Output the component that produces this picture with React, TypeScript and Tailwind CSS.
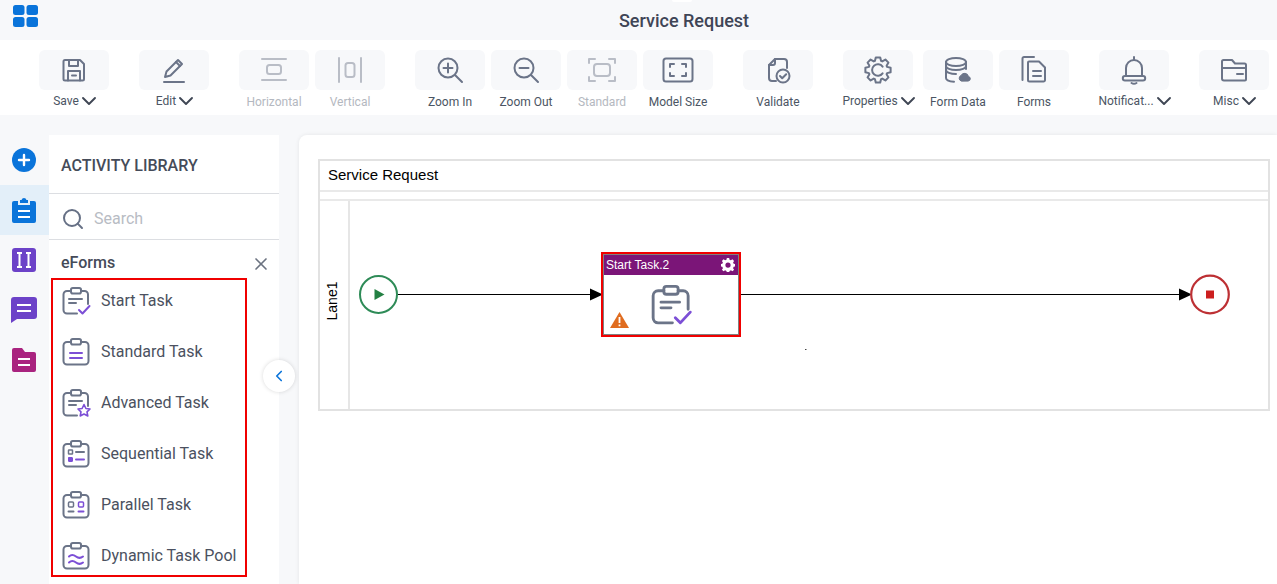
import type { ReactNode } from 'react';
import { ChevronDown, ChevronLeft, Search, X } from 'lucide-react';

const G = '#6b7488';
const P = '#7c4fd6';

const Svg = ({ children, size = 28, color = G, sw = 2 }: { children: ReactNode; size?: number; color?: string; sw?: number }) => (
  <svg className="overflow-visible" width={size} height={size} viewBox="0 0 28 28" fill="none" stroke={color} strokeWidth={sw} strokeLinecap="round" strokeLinejoin="round">
    {children}
  </svg>
);

// outline of an 8 tooth cog round (14,14)
const gearPath = () => {
  const pts: string[] = [];
  for (let i = 0; i < 8; i++) {
    const a = (i * Math.PI) / 4 - Math.PI / 2;
    const at = (r: number, d: number) => `${(14 + r * Math.cos(a + d)).toFixed(2)} ${(14 + r * Math.sin(a + d)).toFixed(2)}`;
    pts.push(at(9.6, -0.33), at(12.8, -0.17), at(12.8, 0.17), at(9.6, 0.33));
  }
  return `M${pts.join('L')}z`;
};

// toolbar icons
const SaveIcon = () => (
  <Svg>
    <path d="M5 4h15l4 4v15a1.500 1.500 0 0 1-1.500 1.500h-17.500A1.500 1.500 0 0 1 3.500 23V5.500A1.500 1.500 0 0 1 5 4z" />
    <path d="M9 4v6h9V4" />
    <path d="M8 24.500V15h12v9.500" />
    <path d="M12 19.500h4" />
  </Svg>
);
const EditIcon = () => (
  <Svg>
    <path d="M5 21l1.500-5.500L18 4l4 4L10.500 19.500z" />
    <path d="M16 6l4 4" />
    <path d="M4 26h20" />
  </Svg>
);
const HorizontalIcon = () => (
  <Svg color="#b9bdc6">
    <path d="M2 3h24M2 24h24" />
    <rect x="7" y="9" width="14" height="9" rx="2.500" />
  </Svg>
);
const VerticalIcon = () => (
  <Svg color="#b9bdc6">
    <path d="M3 2v24M25 2v24" />
    <rect x="9.500" y="7" width="9" height="14" rx="2.500" />
  </Svg>
);
const ZoomInIcon = () => (
  <Svg>
    <circle cx="12" cy="12" r="9.500" />
    <path d="M19 19l7 7M12 7.500v9M7.500 12h9" />
  </Svg>
);
const ZoomOutIcon = () => (
  <Svg>
    <circle cx="12" cy="12" r="9.500" />
    <path d="M19 19l7 7M7.500 12h9" />
  </Svg>
);
const StandardIcon = () => (
  <Svg color="#b9bdc6">
    <path d="M1 7V3h6M21 3h6v4M27 21v4h-6M7 25H1v-4" />
    <rect x="6" y="8" width="16" height="12" rx="3" />
  </Svg>
);
const ModelSizeIcon = () => (
  <Svg>
    <rect x="-0.500" y="2.500" width="29" height="23" rx="2.500" />
    <path d="M6 11V8h4M18 8h4v3M22 17v3h-4M10 20H6v-3" />
  </Svg>
);
const ValidateIcon = () => (
  <Svg>
    <path d="M12 25H8a3 3 0 0 1-3-3V9l6-6h9a3 3 0 0 1 3 3v6" />
    <path d="M11 3v4a2 2 0 0 1-2 2H5" />
    <circle cx="19" cy="20" r="6.500" />
    <path d="M16 20l2.200 2.200 4-4" />
  </Svg>
);
const GearIcon = () => (
  <Svg>
    <path d={gearPath()} />
    <path d="M18.600 10.600a5.800 5.800 0 1 0 0 6.800" />
  </Svg>
);
const FormDataIcon = () => (
  <Svg>
    <ellipse cx="12" cy="6" rx="10" ry="4" />
    <path d="M2 6v16c0 2 3.500 3.500 8 3.800M22 6v7M2 14c0 2.200 4.500 4 10 4M2 10c0 2.200 4.500 4 10 4s10-1.800 10-4" />
    <path fill={G} strokeWidth={1} d="M17 25a3 3 0 0 1 0-5.500 4 4 0 0 1 7.500 1 2.300 2.300 0 0 1 0 4.500z" />
  </Svg>
);
const FormsIcon = () => (
  <Svg>
    <path d="M14 1H4a1.500 1.500 0 0 0-1.500 1.500V24" />
    <path d="M8 6.500a1 1 0 0 1 1-1h10l6 6V24a1.500 1.500 0 0 1-1.500 1.500H9.500A1.500 1.500 0 0 1 8 24z" />
    <path d="M13 15h8M13 20h8" />
  </Svg>
);
const BellIcon = () => (
  <Svg>
    <path d="M14 1v2.500M6 20V12a8 8 0 0 1 16 0v8" />
    <path d="M5 20h18a2.200 2.200 0 0 1 0 4.400H5A2.200 2.200 0 0 1 5 20z" />
    <path d="M11.500 27c1.500 1 3.500 1 5 0" />
  </Svg>
);
const MiscIcon = () => (
  <Svg>
    <path d="M2 22V5.500A1.500 1.500 0 0 1 3.500 4H12l3 3.500h9.500A1.500 1.500 0 0 1 26 9v14.500a1 1 0 0 1-1 1H4a2 2 0 0 1-2-2z" />
    <path d="M2 12h24M17 18h6" />
  </Svg>
);

// base clipboard shape of the task icons, 28x28 box
const Clipboard = ({ children, open }: { children?: ReactNode; open?: boolean }) => (
  <>
    <rect x="9" y="1" width="10" height="5.500" rx="1.800" />
    <path d={open ? 'M9 4H5a3.500 3.500 0 0 0-3.500 3.500V23A3.500 3.500 0 0 0 5 26.500h10M19 4h3.500A3.500 3.500 0 0 1 26 7.500V17' : 'M9 4H5a3.500 3.500 0 0 0-3.500 3.500V23A3.500 3.500 0 0 0 5 26.500h18a3.500 3.500 0 0 0 3.500-3.500V7.500A3.500 3.500 0 0 0 23 4h-4'} />
    {children}
  </>
);

const StartTaskGlyph = ({ size = 28, sw = 2 }: { size?: number; sw?: number }) => (
  <Svg size={size} sw={sw}>
    <Clipboard open>
      <path d="M7 12h13M7 16h7" />
      <path d="M17 23l3.500 3.500L27.500 19" stroke={P} />
    </Clipboard>
  </Svg>
);
const StandardGlyph = () => (
  <Svg>
    <Clipboard>
      <path d="M8 15h12M8 20h12" stroke={P} />
    </Clipboard>
  </Svg>
);
const AdvancedGlyph = () => (
  <Svg>
    <Clipboard open>
      <path d="M7 12h13M7 16h7" />
      <path d="M22 15.500l1.900 4 4.100.5-3 2.900.8 4.100-3.800-2-3.800 2 .8-4.100-3-2.900 4.100-.5z" stroke={P} strokeWidth={1.600} />
    </Clipboard>
  </Svg>
);
const SequentialGlyph = () => (
  <Svg>
    <Clipboard>
      <rect x="6.500" y="10" width="4" height="4" rx="0.500" strokeWidth={1.500} />
      <path d="M14 12h8" />
      <rect x="6.500" y="17.500" width="4" height="4" rx="0.500" stroke={P} fill={P} strokeWidth={1} />
      <path d="M14 19.500h8" stroke={P} />
    </Clipboard>
  </Svg>
);
const ParallelGlyph = () => (
  <Svg>
    <Clipboard>
      <rect x="6.500" y="11" width="5" height="5" rx="1" strokeWidth={1.500} />
      <rect x="16.500" y="11" width="5" height="5" rx="1" stroke={P} strokeWidth={1.500} />
      <path d="M6.500 20.500h5" />
      <path d="M16.500 20.500h5" stroke={P} />
    </Clipboard>
  </Svg>
);
const DynamicGlyph = () => (
  <Svg>
    <Clipboard>
      <path d="M7 14.500c2.500-2.500 4.500-2 7 0s4.500 2 7 0M7 20.500c2.500-2.500 4.500-2 7 0s4.500 2 7 0" stroke={P} />
    </Clipboard>
  </Svg>
);

type Tool = { label: string; icon: ReactNode; menu?: boolean; off?: boolean; cls: string };

const tools: Tool[] = [
  { label: 'Save', icon: <SaveIcon />, menu: true, cls: 'ml-[39px]' },
  { label: 'Edit', icon: <EditIcon />, menu: true, cls: 'ml-[30px]' },
  { label: 'Horizontal', icon: <HorizontalIcon />, off: true, cls: 'ml-[30px]' },
  { label: 'Vertical', icon: <VerticalIcon />, off: true, cls: 'ml-[6px]' },
  { label: 'Zoom In', icon: <ZoomInIcon />, cls: 'ml-[30px]' },
  { label: 'Zoom Out', icon: <ZoomOutIcon />, cls: 'ml-[6px]' },
  { label: 'Standard', icon: <StandardIcon />, off: true, cls: 'ml-[6px]' },
  { label: 'Model Size', icon: <ModelSizeIcon />, cls: 'ml-[6px]' },
  { label: 'Validate', icon: <ValidateIcon />, cls: 'ml-[30px]' },
  { label: 'Properties', icon: <GearIcon />, menu: true, cls: 'ml-[30px]' },
  { label: 'Form Data', icon: <FormDataIcon />, cls: 'ml-[10px]' },
  { label: 'Forms', icon: <FormsIcon />, cls: 'ml-[6px]' },
  { label: 'Notificat...', icon: <BellIcon />, menu: true, cls: 'ml-[30px]' },
  { label: 'Misc', icon: <MiscIcon />, menu: true, cls: 'ml-[30px]' },
];

const tasks: { label: string; icon: ReactNode }[] = [
  { label: 'Start Task', icon: <StartTaskGlyph /> },
  { label: 'Standard Task', icon: <StandardGlyph /> },
  { label: 'Advanced Task', icon: <AdvancedGlyph /> },
  { label: 'Sequential Task', icon: <SequentialGlyph /> },
  { label: 'Parallel Task', icon: <ParallelGlyph /> },
  { label: 'Dynamic Task Pool', icon: <DynamicGlyph /> },
];

const ToolButton = ({ tool }: { tool: Tool }) => (
  <div className={`flex w-[70px] shrink-0 flex-col items-center ${tool.cls}`}>
    <div className="flex h-10 w-[70px] items-center justify-center rounded-md bg-[#f7f8fa]">{tool.icon}</div>
    {tool.menu ? (
      <div className="mt-[3px] flex h-4 items-center text-xs whitespace-nowrap text-[#4b5563]">
        {tool.label}
        <ChevronDown size={24} strokeWidth={1.9} className="mr-[-6px] ml-[-2px] text-[#3f4654]" />
      </div>
    ) : (
      <div className={`mt-1 h-4 text-xs whitespace-nowrap ${tool.off ? 'text-[#b4b8c0]' : 'text-[#4b5563]'}`}>{tool.label}</div>
    )}
  </div>
);

const Rail = () => (
  <div className="flex w-[49px] shrink-0 flex-col">
    <div className="flex h-[50px] items-center justify-center pr-[2px]">
      <svg width="24" height="24" viewBox="0 0 24 24">
        <circle cx="12" cy="12" r="12" fill="#0a74da" />
        <path d="M12 7v10M7 12h10" stroke="#fff" strokeWidth="2.400" strokeLinecap="round" />
      </svg>
    </div>
    <div className="flex h-[50px] items-center justify-center bg-[#e3eff9] pr-[2px]">
      <svg width="24" height="26" viewBox="0 0 24 26">
        <path fill="#0a74da" d="M8 3h1.500a2.600 2.600 0 0 1 5 0H16v3H8zM2 4h4v4h12V4h4a2 2 0 0 1 2 2v18a2 2 0 0 1-2 2H2a2 2 0 0 1-2-2V6a2 2 0 0 1 2-2z" />
        <path d="M6 14h12M6 20h12" stroke="#fff" strokeWidth="2.200" />
      </svg>
    </div>
    <div className="flex h-[50px] items-center justify-center pr-[2px]">
      <svg width="24" height="24" viewBox="0 0 24 24">
        <rect width="24" height="24" rx="3" fill="#6c42c8" />
        <path d="M5 5h5M7.500 5v14M5 19h5M14 5h5M16.500 5v14M14 19h5" stroke="#fff" strokeWidth="2" />
      </svg>
    </div>
    <div className="flex h-[50px] items-center justify-center pr-[2px]">
      <svg width="26" height="26" viewBox="0 0 26 26">
        <path fill="#6c42c8" d="M3 0h20a3 3 0 0 1 3 3v16a3 3 0 0 1-3 3H6l-6 4V3a3 3 0 0 1 3-3z" />
        <path d="M6 8h14M6 14h14" stroke="#fff" strokeWidth="2.200" />
      </svg>
    </div>
    <div className="flex h-[50px] items-center justify-center pr-[2px]">
      <svg width="24" height="24" viewBox="0 0 24 24">
        <path fill="#a9237f" d="M0 2a2 2 0 0 1 2-2h8l3 4h9a2 2 0 0 1 2 2v16a2 2 0 0 1-2 2H2a2 2 0 0 1-2-2z" />
        <path d="M6 11h12M6 17h12" stroke="#fff" strokeWidth="2.200" />
      </svg>
    </div>
  </div>
);

const Library = () => (
  <div className="relative w-[230px] shrink-0 bg-white">
    <div className="flex h-[59px] items-center border-b border-[#dcdee2] pt-1 pl-3 text-base font-medium text-[#454b59]">ACTIVITY LIBRARY</div>
    <div className="flex h-[46px] items-center gap-[9px] border-b border-[#dcdee2] pt-1 pl-3">
      <Search size={24} strokeWidth={2} className="text-[#667085]" />
      <span className="text-base text-[#b8bcc4]">Search</span>
    </div>
    <div className="flex h-[38px] items-center justify-between pt-2 pr-2 pl-3">
      <span className="text-base font-medium text-[#454b59]">eForms</span>
      <X size={20} strokeWidth={2} className="mt-[1px] text-[#6b7280]" />
    </div>
    <div className="ml-[2px] flex h-[299px] w-[196px] flex-col gap-[7px] border-2 border-[#f00000]">
      {tasks.map((t) => (
        <div key={t.label} className="mt-[-1px] mb-[1px] flex h-[44px] shrink-0 items-center gap-[11px] pl-[9px]">
          {t.icon}
          <span className="text-base text-[#4b5160]">{t.label}</span>
        </div>
      ))}
    </div>
    <button className="absolute top-[225px] left-[214px] flex h-8 w-8 items-center justify-center rounded-full bg-white shadow-[0_0_4px_rgba(0,0,0,0.15)]">
      <ChevronLeft size={18} strokeWidth={2.2} className="text-[#0a74da]" />
    </button>
  </div>
);

const Diagram = () => (
  <div className="relative flex-1">
    <svg className="absolute inset-0 h-full w-full" fill="none">
      <path d="M47 93.500h194" stroke="#000" strokeWidth="1" />
      <path d="M240 87.500l13 6-13 6z" fill="#000" />
      <path d="M389 93.500h442" stroke="#000" strokeWidth="1" />
      <path d="M829 87.500l13 6-13 6z" fill="#000" />
      <circle cx="28.500" cy="93.500" r="18.500" stroke="#2e8b57" strokeWidth="2" fill="#fff" />
      <path d="M24.500 88l10 5.500-10 5.500z" fill="#238043" />
      <circle cx="860" cy="93.500" r="18.800" stroke="#bd3034" strokeWidth="2.200" fill="#fff" />
      <rect x="856" y="89.500" width="8" height="8" fill="#cc1f1f" />
      <rect x="455" y="148" width="1.500" height="1" fill="#444" />
    </svg>
    <div className="absolute top-[51px] left-[251px] h-[85px] w-[140px] border-2 border-[#f00000]">
      <div className="relative h-full w-full border border-[#808080] bg-white">
        <div className="flex h-[20px] items-center justify-between bg-[#7b1578] pr-[3px] pl-[2px] font-['Liberation_Sans',sans-serif] text-xs text-white">
          Start Task.2
          <svg width="14" height="14" viewBox="0 0 24 24" fill="#fff">
            <path fillRule="evenodd" d="M10 1h4l.6 3 2.400 1 2.600-1.700 2.800 2.800L20.700 8.700l1 2.300 3 .6v4l-3 .6-1 2.300 1.700 2.600-2.800 2.800-2.600-1.700-2.400 1-.6 3h-4l-.6-3-2.400-1-2.600 1.700-2.800-2.800 1.700-2.600-1-2.300-3-.6v-4l3-.6 1-2.300L1.600 6.100l2.800-2.800L7 5l2.400-1zM12 8.500a4.500 4.500 0 1 0 0 9 4.500 4.500 0 0 0 0-9z" transform="translate(0 -1)" />
          </svg>
        </div>
        <div className="absolute top-[30px] left-[47px]">
          <StartTaskGlyph size={40} sw={2} />
        </div>
        <svg className="absolute bottom-[6px] left-[6px]" width="19" height="16" viewBox="0 0 19 16">
          <path d="M9.500 0L19 16H0z" fill="#e06c1f" />
          <path d="M9.500 5v6M9.500 12.500v1.800" stroke="#fff" strokeWidth="1.800" />
        </svg>
      </div>
    </div>
  </div>
);

const Canvas = () => (
  <div className="ml-5 flex-1 rounded-tl-lg bg-white pt-6 pr-[7px] pl-[19px] shadow-[0_0_4px_rgba(0,0,0,0.08)]">
    <div className="flex h-[252px] flex-col border-2 border-[#e2e2e2] font-['Liberation_Sans',sans-serif] text-black">
      <div className="flex h-[29px] shrink-0 items-center pl-2 text-[15px]">Service Request</div>
      <div className="h-[11px] shrink-0 border-y-2 border-[#e9e9e9]" />
      <div className="flex flex-1">
        <div className="flex w-[30px] shrink-0 items-center justify-center border-r-2 border-[#e6e6e6] pr-[3px]">
          <span className="mt-[-8px] block -rotate-90 text-sm">Lane1</span>
        </div>
        <Diagram />
      </div>
    </div>
  </div>
);

export default function App() {
  return (
    <div className="relative flex h-[584px] w-[1277px] flex-col overflow-hidden bg-[#f7f8fa] font-['Roboto',sans-serif]">
      <div className="relative flex h-10 shrink-0 items-center justify-center">
        <svg className="absolute top-[5px] left-[13px]" width="25" height="22" viewBox="0 0 25 22" fill="#0a74da">
          <rect width="11.500" height="10" rx="2.500" />
          <rect x="13.500" width="11.500" height="10" rx="2.500" />
          <rect y="12" width="11.500" height="10" rx="2.500" />
          <rect x="13.500" y="12" width="11.500" height="10" rx="2.500" />
        </svg>
        <div className="absolute top-0 left-[672px] h-[2px] w-5 rounded-b-full bg-white" />
        <span className="mt-[1px] ml-[91px] text-lg font-medium text-[#3f4556]">Service Request</span>
      </div>
      <div className="flex h-[75px] shrink-0 bg-white pt-[10px]">
        {tools.map((t) => (
          <ToolButton key={t.label} tool={t} />
        ))}
      </div>
      <div className="flex flex-1 pt-5">
        <Rail />
        <Library />
        <Canvas />
      </div>
    </div>
  );
}
